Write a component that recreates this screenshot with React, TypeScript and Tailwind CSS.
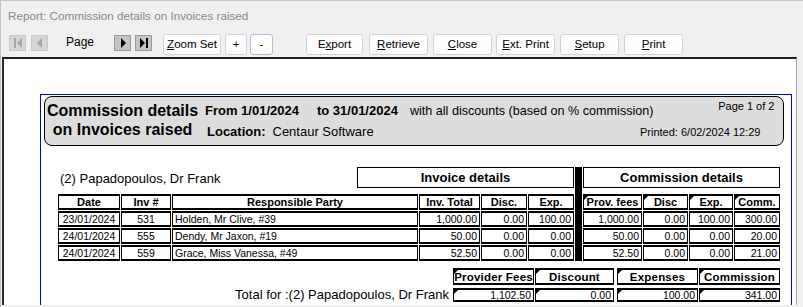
import React from 'react';

interface Line {
  date: string;
  inv: string;
  party: string;
  total: string;
  disc: string;
  exp: string;
  fees: string;
  cdisc: string;
  cexp: string;
  comm: string;
}

const lines: Line[] = [
  { date: '23/01/2024', inv: '531', party: 'Holden, Mr Clive, #39', total: '1,000.00', disc: '0.00', exp: '100.00', fees: '1,000.00', cdisc: '0.00', cexp: '100.00', comm: '300.00' },
  { date: '24/01/2024', inv: '555', party: 'Dendy, Mr Jaxon, #19', total: '50.00', disc: '0.00', exp: '0.00', fees: '50.00', cdisc: '0.00', cexp: '0.00', comm: '20.00' },
  { date: '24/01/2024', inv: '559', party: 'Grace, Miss Vanessa, #49', total: '52.50', disc: '0.00', exp: '0.00', fees: '52.50', cdisc: '0.00', cexp: '0.00', comm: '21.00' },
];

const leftCols = ['w-[62px]', 'w-[50px]', 'w-[246px]', 'w-[61px]', 'w-[46px]', 'w-[46px]'];
const rightCols = ['w-[59px]', 'w-[45px]', 'w-[44px]', 'w-[46px]'];

// little black corner mark the report designer leaves on some fields
function Mark() {
  return <span className="absolute left-0 top-0 h-0 w-0 border-t-[4px] border-r-[4px] border-t-black border-r-transparent" />;
}

function Cell({ w, head, align = 'right', mark, children }: { w: string; head?: boolean; align?: 'left' | 'right' | 'center'; mark?: boolean; children: React.ReactNode }) {
  const a = align === 'left' ? 'justify-start pl-[2px]' : align === 'center' ? 'justify-center' : 'justify-end pr-[2px]';
  return (
    <div className={`relative flex h-full shrink-0 items-center overflow-hidden whitespace-nowrap border-x border-y-2 border-black leading-[12px] ${a} ${w} ${head ? 'text-[11px] font-bold' : 'text-[10.5px]'}`}>
      {mark && <Mark />}
      {children}
    </div>
  );
}

function NavIcon({ kind, enabled }: { kind: 'first' | 'prev' | 'next' | 'last'; enabled?: boolean }) {
  const fill = enabled ? '#000000' : '#a6a6a6';
  return (
    <div className={`flex h-[16px] w-[17px] items-center justify-center border ${enabled ? 'border-[#9a9a9a] bg-[#c4c4c4]' : 'border-[#c8c8c8] bg-[#d6d6d6]'}`}>
      <svg width="12" height="12" viewBox="0 0 12 12">
        {kind === 'first' && (
          <>
            <rect x="2" y="1" width="2" height="10" fill={fill} />
            <path d="M10 1 L5 6 L10 11 Z" fill={fill} />
          </>
        )}
        {kind === 'prev' && <path d="M8 1 L3 6 L8 11 Z" fill={fill} />}
        {kind === 'next' && <path d="M4 1 L9 6 L4 11 Z" fill={fill} />}
        {kind === 'last' && (
          <>
            <path d="M2 1 L7 6 L2 11 Z" fill={fill} />
            <rect x="8" y="1" width="2" height="10" fill={fill} />
          </>
        )}
      </svg>
    </div>
  );
}

function Btn({ w, ml, focus, children }: { w: string; ml: string; focus?: boolean; children: React.ReactNode }) {
  return (
    <button className={`flex h-[21px] items-center justify-center rounded-[3px] border bg-[#fdfdfd] text-[11.5px] text-black ${focus ? 'border-[#a9c1dc]' : 'border-[#d3d3d3]'} ${w} ${ml}`}>
      {children}
    </button>
  );
}

function TotalHead({ children }: { children: React.ReactNode }) {
  return <span className="text-[11.5px] tracking-[0.2px]">{children}</span>;
}

export default function App() {
  return (
    <div className="h-[307px] w-[803px] overflow-hidden border-l border-t border-[#c4c4c4] bg-[#f0f0f0] font-['Liberation_Sans',Arial,sans-serif] text-black">
      <div className="flex h-[29px] items-center pl-[7px] text-[11.7px] text-[#8a8a8a]">
        Report: Commission details on Invoices raised
      </div>

      <div className="flex h-[27px] items-start pt-[4px]">
        <div className="ml-[8px] mt-[1px]"><NavIcon kind="first" /></div>
        <div className="ml-[5px] mt-[1px]"><NavIcon kind="prev" /></div>
        <div className="ml-[18px] mt-[1px] text-[12px] leading-[14px]">Page</div>
        <div className="ml-[20px] mt-[1px]"><NavIcon kind="next" enabled /></div>
        <div className="ml-[4px] mt-[1px]"><NavIcon kind="last" enabled /></div>
        <Btn w="w-[58px]" ml="ml-[11px]"><span><u>Z</u>oom Set</span></Btn>
        <Btn w="w-[22px]" ml="ml-[4px]">+</Btn>
        <Btn w="w-[23px]" ml="ml-[3px]" focus>-</Btn>
        <Btn w="w-[57px]" ml="ml-[33px]"><span>E<u>x</u>port</span></Btn>
        <Btn w="w-[59px]" ml="ml-[6px]"><span><u>R</u>etrieve</span></Btn>
        <Btn w="w-[59px]" ml="ml-[5px]"><span><u>C</u>lose</span></Btn>
        <Btn w="w-[59px]" ml="ml-[4px]"><span><u>E</u>xt. Print</span></Btn>
        <Btn w="w-[59px]" ml="ml-[5px]"><span><u>S</u>etup</span></Btn>
        <Btn w="w-[59px]" ml="ml-[5px]"><span><u>P</u>rint</span></Btn>
      </div>

      <div className="ml-[1px] h-[248px] w-[795px] overflow-hidden border-l-2 border-r border-t-2 border-l-[#2a2a2a] border-r-[#a8a8a8] border-t-[#1e1e1e] bg-white">
        <div className="ml-[36px] mt-[35px] h-[300px] w-[752px] border-l border-r border-t border-[#0000ff]">
          {/* page header */}
          <div className="ml-[3px] mt-[1px] flex h-[50px] w-[740px] rounded-[8px] border border-black bg-[#dddddd]">
            <div className="flex w-[155px] shrink-0 flex-col items-center whitespace-nowrap pt-[4px] text-[16px] font-bold leading-[19px]">
              <div>Commission details</div>
              <div>on Invoices raised</div>
            </div>
            <div className="flex w-[440px] shrink-0 flex-col pl-[5px] pt-[6px] text-[13px] leading-[16px]">
              <div className="flex whitespace-nowrap">
                <span className="font-bold">From 1/01/2024</span>
                <span className="ml-[18px] font-bold">to 31/01/2024</span>
                <span className="ml-[12px] text-[12.6px]">with all discounts (based on % commission)</span>
              </div>
              <div className="ml-[2px] mt-[5px] flex whitespace-nowrap">
                <span className="font-bold">Location:</span>
                <span className="ml-[7px]">Centaur Software</span>
              </div>
            </div>
            <div className="flex flex-1 flex-col items-end pr-[9px] pt-[3px] text-[11px] leading-[13px]">
              <div className="whitespace-nowrap">Page 1 of 2</div>
              <div className="mr-[14px] mt-[13px] whitespace-nowrap">Printed: 6/02/2024 12:29</div>
            </div>
          </div>

          {/* detail band */}
          <div className="ml-[17px] mt-[21px] flex gap-[1px]">
            <div className="flex w-[516px] flex-col">
              <div className="flex h-[21px] items-end">
                <div className="flex-1 pb-[1px] pl-[2px] text-[13px] leading-[16px]">(2) Papadopoulos, Dr Frank</div>
                <div className="flex h-full w-[217px] items-center justify-center border border-black text-[13px] font-bold">Invoice details</div>
              </div>
              <div className="mt-[6px] flex flex-col gap-[1px]">
                <div className="flex h-[16px] gap-[1px]">
                  <Cell w={leftCols[0]} head align="center">Date</Cell>
                  <Cell w={leftCols[1]} head align="center">Inv #</Cell>
                  <Cell w={leftCols[2]} head align="center">Responsible Party</Cell>
                  <Cell w={leftCols[3]} head align="center">Inv. Total</Cell>
                  <Cell w={leftCols[4]} head align="center">Disc.</Cell>
                  <Cell w={leftCols[5]} head align="center">Exp.</Cell>
                </div>
                {lines.map((l) => (
                  <div key={l.inv} className="flex h-[16px] gap-[1px]">
                    <Cell w={leftCols[0]} align="center">{l.date}</Cell>
                    <Cell w={leftCols[1]} align="center">{l.inv}</Cell>
                    <Cell w={leftCols[2]} align="left">{l.party}</Cell>
                    <Cell w={leftCols[3]}>{l.total}</Cell>
                    <Cell w={leftCols[4]}>{l.disc}</Cell>
                    <Cell w={leftCols[5]}>{l.exp}</Cell>
                  </div>
                ))}
              </div>
            </div>

            <div className="w-[7px] bg-black" />

            <div className="flex w-[197px] flex-col">
              <div className="flex h-[21px] items-center justify-center border border-black text-[13px] font-bold">Commission details</div>
              <div className="mt-[6px] flex flex-col gap-[1px]">
                <div className="flex h-[16px] gap-[1px]">
                  <Cell w={rightCols[0]} head align="center" mark>Prov. fees</Cell>
                  <Cell w={rightCols[1]} head align="center" mark>Disc</Cell>
                  <Cell w={rightCols[2]} head align="center" mark>Exp.</Cell>
                  <Cell w={rightCols[3]} head align="center" mark>Comm.</Cell>
                </div>
                {lines.map((l) => (
                  <div key={l.inv} className="flex h-[16px] gap-[1px]">
                    <Cell w={rightCols[0]}>{l.fees}</Cell>
                    <Cell w={rightCols[1]}>{l.cdisc}</Cell>
                    <Cell w={rightCols[2]}>{l.cexp}</Cell>
                    <Cell w={rightCols[3]}>{l.comm}</Cell>
                  </div>
                ))}
              </div>
            </div>
          </div>

          {/* group totals */}
          <div className="mt-[7px] flex w-[739px] justify-end">
            <div className="flex h-[17px]">
              <Cell w="w-[81px]" head align="center" mark><TotalHead>Provider Fees</TotalHead></Cell>
              <div className="ml-[1px] h-full"><Cell w="w-[79px]" head align="center" mark><TotalHead>Discount</TotalHead></Cell></div>
              <div className="ml-[3px] h-full"><Cell w="w-[81px]" head align="center" mark><TotalHead>Expenses</TotalHead></Cell></div>
              <div className="ml-[1px] h-full"><Cell w="w-[81px]" head align="center" mark><TotalHead>Commission</TotalHead></Cell></div>
            </div>
          </div>
          <div className="mt-[2px] flex w-[739px] items-end justify-end">
            <div className="pr-[4px] text-[13px] leading-[15px]">Total for :(2) Papadopoulos, Dr Frank</div>
            <div className="flex h-[14px]">
              <Cell w="w-[81px]" mark>1,102.50</Cell>
              <div className="ml-[1px] h-full"><Cell w="w-[79px]" mark>0.00</Cell></div>
              <div className="ml-[3px] h-full"><Cell w="w-[81px]" mark>100.00</Cell></div>
              <div className="ml-[1px] h-full"><Cell w="w-[81px]" mark>341.00</Cell></div>
            </div>
          </div>
          <div className="ml-[3px] mt-[3px] h-[2px] w-[736px] bg-black" />
        </div>
      </div>
    </div>
  );
}
